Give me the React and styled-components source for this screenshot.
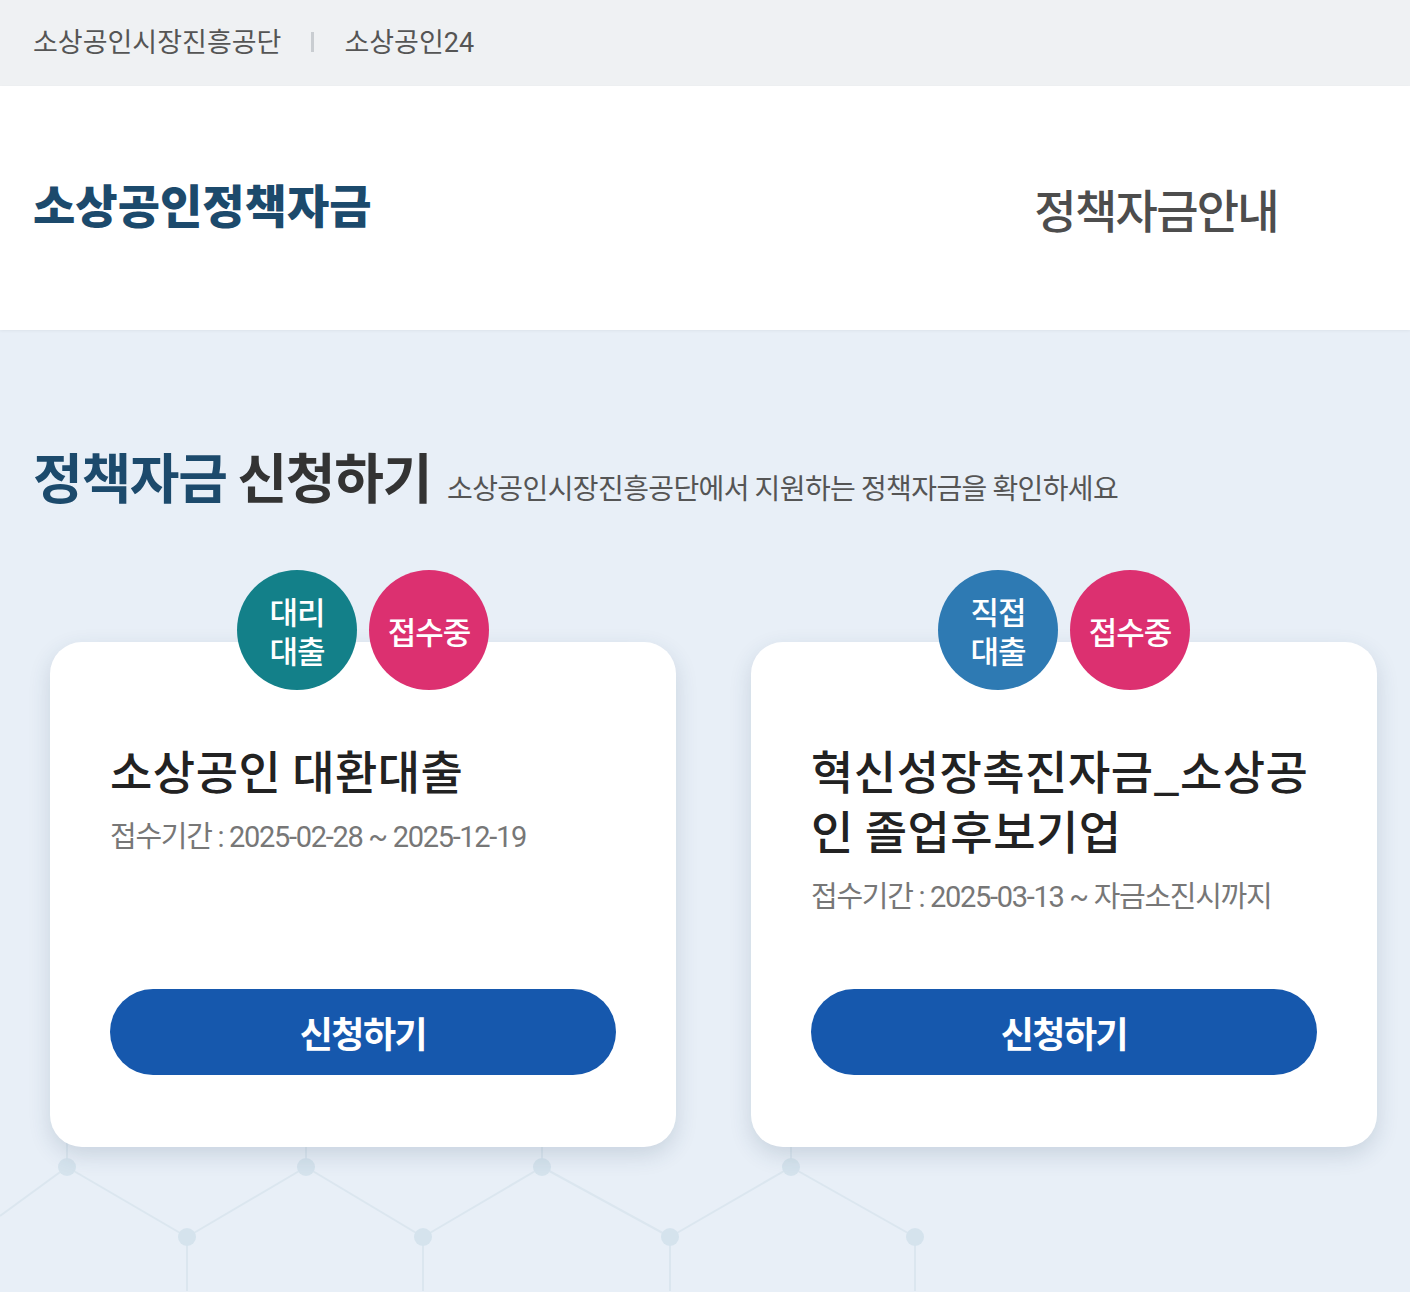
import React from 'react'
import styled, { createGlobalStyle } from 'styled-components'

const GlobalStyle = createGlobalStyle`
  * { box-sizing: border-box; }
  body {
    margin: 0;
    background: #e8eff7;
    font-family: Roboto, "Noto Sans CJK KR", sans-serif;
    color: #222;
  }
`

const TopBar = styled.div`
  height: 86px;
  background: #eff1f3;
  display: flex;
  align-items: center;
  padding: 0 33px 6px;
  gap: 30px;
`

const TopLink = styled.a`
  font-size: 27px;
  letter-spacing: 0;
  color: #555;
  text-decoration: none;
`

const Divider = styled.span`
  width: 3px;
  height: 20px;
  margin-top: 4px;
  background: #c9cdd1;
`

const Header = styled.header`
  height: 244px;
  background: #fff;
  display: flex;
  align-items: center;
  justify-content: space-between;
  padding: 0 132px 0 33px;
  box-shadow: 0 1px 3px rgba(0, 0, 0, 0.05);
  position: relative;
  z-index: 2;
`

const Logo = styled.h1`
  margin: 0 0 10px;
  font-family: "Noto Sans CJK KR", sans-serif;
  font-size: 46px;
  font-weight: 900;
  letter-spacing: 0;
  color: #1c4a6c;
`

const Nav = styled.nav`
  font-family: "Noto Sans CJK KR", sans-serif;
  font-size: 46px;
  font-weight: 500;
  letter-spacing: -1.7px;
  color: #4d4d4d;
`

const Main = styled.main`
  position: relative;
  padding: 114px 33px 144px;
  overflow: hidden;
`

const TitleRow = styled.div`
  display: flex;
  align-items: baseline;
  gap: 16px;
  position: relative;
  z-index: 1;
`

const SectionTitle = styled.h2`
  margin: 0;
  font-family: "Noto Sans CJK KR", sans-serif;
  font-size: 54px;
  line-height: 64px;
  font-weight: 700;
  letter-spacing: -1.3px;
  color: #333;
`

const Accent = styled.span`
  color: #1c4a6c;
`

const Sub = styled.p`
  margin: 0;
  font-family: "Noto Sans CJK KR", sans-serif;
  font-size: 28px;
  letter-spacing: -0.6px;
  color: #555;
`

const CardList = styled.div`
  display: grid;
  grid-template-columns: 626px 626px;
  gap: 75px;
  margin: 134px 0 0 17px;
  position: relative;
  z-index: 1;
`

const Card = styled.article`
  position: relative;
  height: 505px;
  background: #fff;
  border-radius: 32px;
  box-shadow: 0 8px 22px rgba(40, 70, 100, 0.16);
  padding: 97px 60px 72px;
  display: flex;
  flex-direction: column;
`

const Badges = styled.div`
  position: absolute;
  top: -72px;
  left: 0;
  right: 0;
  display: flex;
  justify-content: center;
  gap: 12px;
`

const Badge = styled.span`
  width: 120px;
  height: 120px;
  border-radius: 50%;
  background: ${({ color }) => color};
  color: #fff;
  display: flex;
  align-items: center;
  justify-content: center;
  text-align: center;
  font-family: "Noto Sans CJK KR", sans-serif;
  font-size: 31px;
  line-height: 39px;
  font-weight: 500;
  letter-spacing: -1px;
  white-space: pre-line;
`

const CardTitle = styled.h3`
  margin: 0;
  font-family: "Noto Sans CJK KR", sans-serif;
  font-size: 46px;
  line-height: 60px;
  font-weight: 500;
  letter-spacing: 0.5px;
  color: #222;
`

const Period = styled.p`
  margin: 18px 0 0;
  font-size: 29px;
  line-height: 40px;
  letter-spacing: -1.3px;
  color: #777;
`

const ApplyButton = styled.button`
  margin-top: auto;
  height: 86px;
  width: 100%;
  border: 0;
  border-radius: 43px;
  background: #1658ad;
  color: #fff;
  font-family: "Noto Sans CJK KR", sans-serif;
  font-size: 36px;
  font-weight: 700;
  letter-spacing: -1.5px;
  cursor: pointer;
`

const Network = styled.svg`
  position: absolute;
  left: 0;
  bottom: 0;
  width: 1410px;
  height: 200px;
  z-index: 0;
`

const upper = [67, 306, 542, 791]
const lower = [187, 423, 670, 915]
const UY = 76
const LY = 146

const NetworkLines = () => (
  <Network viewBox="0 0 1410 200">
    <g stroke="#dbe6ef" strokeWidth="2" fill="none">
      <line x1="0" y1="125" x2="67" y2={UY} />
      {upper.map((x, i) => (
        <g key={x}>
          {lower[i - 1] && <line x1={x} y1={UY} x2={lower[i - 1]} y2={LY} />}
          <line x1={x} y1={UY} x2={lower[i]} y2={LY} />
          <line x1={x} y1="0" x2={x} y2={UY} />
        </g>
      ))}
      {lower.map(x => (
        <line key={x} x1={x} y1={LY} x2={x} y2="200" />
      ))}
    </g>
    <g fill="#d5e3ed">
      {upper.map(x => <circle key={x} cx={x} cy={UY} r="9" />)}
      {lower.map(x => <circle key={x} cx={x} cy={LY} r="9" />)}
    </g>
  </Network>
)

const funds = [
  {
    kind: '대리\n대출',
    kindColor: '#138089',
    title: '소상공인 대환대출',
    period: '접수기간 : 2025-02-28 ~ 2025-12-19',
  },
  {
    kind: '직접\n대출',
    kindColor: '#2e7ab3',
    title: '혁신성장촉진자금_소상공인 졸업후보기업',
    period: '접수기간 : 2025-03-13 ~ 자금소진시까지',
  },
]

export default function App() {
  return (
    <>
      <GlobalStyle />
      <TopBar>
        <TopLink>소상공인시장진흥공단</TopLink>
        <Divider />
        <TopLink>소상공인24</TopLink>
      </TopBar>
      <Header>
        <Logo>소상공인정책자금</Logo>
        <Nav>정책자금안내</Nav>
      </Header>
      <Main>
        <NetworkLines />
        <TitleRow>
          <SectionTitle><Accent>정책자금</Accent> 신청하기</SectionTitle>
          <Sub>소상공인시장진흥공단에서 지원하는 정책자금을 확인하세요</Sub>
        </TitleRow>
        <CardList>
          {funds.map(fund => (
            <Card key={fund.title}>
              <Badges>
                <Badge color={fund.kindColor}>{fund.kind}</Badge>
                <Badge color="#dc3070">접수중</Badge>
              </Badges>
              <CardTitle>{fund.title}</CardTitle>
              <Period>{fund.period}</Period>
              <ApplyButton>신청하기</ApplyButton>
            </Card>
          ))}
        </CardList>
      </Main>
    </>
  )
}
